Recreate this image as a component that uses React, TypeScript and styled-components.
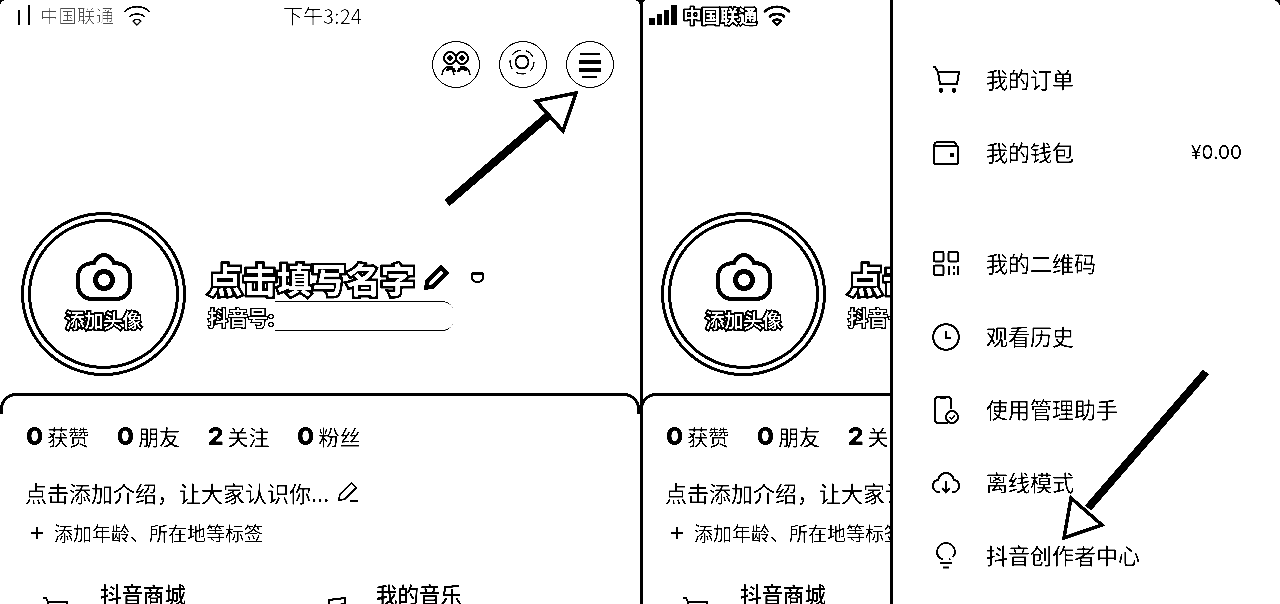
import { ReactNode } from "react";
import styled, { createGlobalStyle } from "styled-components";

const GlobalStyle = createGlobalStyle`
  html, body {
    margin: 0;
    padding: 0;
    background: #fff;
  }
  body {
    font-family: "Noto Sans CJK SC", "Liberation Sans", sans-serif;
    color: #000;
  }
`;

function SignalIcon({ faint }: { faint?: boolean }) {
  return (
    <svg width={faint ? 18 : 30} height="22" viewBox={faint ? "0 0 18 22" : "0 0 30 22"} fill="#000">
      {!faint && <rect x="1" y="14" width="6" height="7" rx="1" />}
      {!faint && <rect x="9" y="10" width="5" height="11" rx="1" />}
      <rect x={faint ? 4 : 16} y="6" width={faint ? 2 : 5} height="15" rx="1" />
      <rect x={faint ? 14 : 23} y="1" width={faint ? 2 : 6} height="20" rx="1" />
    </svg>
  );
}

function WifiIcon({ faint }: { faint?: boolean }) {
  return (
    <svg width="30" height="22" viewBox="0 0 30 22" fill="none" stroke="#000" strokeWidth={faint ? 1.4 : 2.6}>
      <path d="M2 8 C9 1 21 1 28 8" />
      <path d="M7 13 C11 9 19 9 23 13" />
      <path d="M11 17 L15 21 L19 17 C17 15 13 15 11 17 Z" fill={faint ? "none" : "#fff"} />
    </svg>
  );
}

function FriendsIcon() {
  return (
    <svg width="34" height="30" viewBox="0 0 34 30" fill="none" stroke="#000" strokeWidth="1.6">
      <circle cx="11" cy="8" r="6" strokeWidth="2" />
      <circle cx="23" cy="8" r="6" strokeWidth="2" />
      <circle cx="11" cy="8" r="2" fill="#000" />
      <circle cx="23" cy="8" r="2" fill="#000" />
      <path d="M3 25 C4 17 9 16 13 17 L15 25" />
      <path d="M8 21 C10 17 14 17 16 22" strokeWidth="3" />
      <path d="M19 22 C21 17 25 17 27 21" strokeWidth="3" />
      <path d="M21 17 C26 16 30 18 31 25" />
    </svg>
  );
}

function ScanIcon() {
  return (
    <svg width="32" height="32" viewBox="0 0 32 32" fill="none" stroke="#000">
      <circle cx="15" cy="13" r="6.5" strokeWidth="1.8" />
      <circle cx="15" cy="13" r="12" strokeWidth="1.2" strokeDasharray="10 5" />
    </svg>
  );
}

function MenuIcon() {
  return (
    <svg width="26" height="28" viewBox="0 0 26 28" stroke="#000">
      <path d="M3 3 H23" strokeWidth="1.4" />
      <path d="M2 11 H24" strokeWidth="4" />
      <path d="M2 19 H24" strokeWidth="4" />
      <path d="M5 26 H20" strokeWidth="1.4" />
    </svg>
  );
}

function CameraIcon() {
  return (
    <svg width="56" height="48" viewBox="0 0 56 48" fill="none" stroke="#000" strokeWidth="4">
      <path d="M18 10 C20 5 24 2 28 2 C32 2 36 5 38 10 C46 10 54 14 54 24 V32 C54 40 48 46 40 46 H16 C8 46 2 40 2 32 V24 C2 14 10 10 18 10 Z" />
      <circle cx="28" cy="27" r="8.5" strokeWidth="5" />
    </svg>
  );
}

function PencilIcon({ size, bold }: { size: number; bold?: boolean }) {
  return (
    <svg width={size} height={size} viewBox="0 0 24 24" fill="none" stroke="#000" strokeWidth={bold ? 4 : 1.8}>
      <path d="M3 21 L4 15 L16 3 L21 8 L9 20 Z" />
      {!bold && <path d="M15 22 H23" strokeWidth="2.4" />}
    </svg>
  );
}

function CartIcon() {
  return (
    <svg width="28" height="27" viewBox="0 0 28 27" fill="none" stroke="#000" strokeWidth="2">
      <path d="M1 1 H3 L6 6 H27 L25 18 H8 L6 6" />
      <circle cx="9" cy="24.5" r="1.4" fill="#000" />
      <circle cx="22" cy="24.5" r="1.4" fill="#000" />
    </svg>
  );
}

function WalletIcon() {
  return (
    <svg width="26" height="24" viewBox="0 0 26 24" fill="none" stroke="#000" strokeWidth="2">
      <path d="M1 6 C1 3 2 1 5 1 H20 C22 1 23 2 23 4" />
      <rect x="1" y="5" width="24" height="18" rx="2" />
      <circle cx="19" cy="14" r="1.2" fill="#000" />
    </svg>
  );
}

function QrIcon() {
  return (
    <svg width="26" height="25" viewBox="0 0 26 25" fill="none" stroke="#000" strokeWidth="2">
      <rect x="1" y="1" width="9.5" height="9.5" rx="1" />
      <rect x="15.5" y="1" width="9.5" height="9.5" rx="1" />
      <rect x="1" y="14.5" width="9.5" height="9.5" rx="1" />
      <path d="M16 15 V24 M21 15 V18 M21 21 V24 M25 15 V24" strokeWidth="2.4" />
    </svg>
  );
}

function ClockIcon() {
  return (
    <svg width="28" height="28" viewBox="0 0 28 28" fill="none" stroke="#000" strokeWidth="2">
      <circle cx="14" cy="14" r="12.8" />
      <path d="M14 8 V15 H19" strokeWidth="2.4" />
    </svg>
  );
}

function PhoneCheckIcon() {
  return (
    <svg width="25" height="28" viewBox="0 0 25 28" fill="none" stroke="#000" strokeWidth="2">
      <path d="M14 27 H4 C2 27 1 26 1 24 V4 C1 2 2 1 4 1 H14 C16 1 17 2 17 4 V13" />
      <path d="M6 1.5 H12" strokeWidth="3" />
      <circle cx="18" cy="21" r="6" />
      <path d="M15.5 21 L17.5 23 L21 19" strokeWidth="1.6" />
    </svg>
  );
}

function CloudIcon() {
  return (
    <svg width="28" height="22" viewBox="0 0 28 22" fill="none" stroke="#000" strokeWidth="2">
      <path d="M8 20 H7 C3.5 20 1 17.5 1 14 C1 11 3 8.5 6 8 C7 4 10 1 14 1 C18 1 21 4 22 8 C25 8.5 27 11 27 14 C27 17.5 24.5 20 21 20 H20" />
      <path d="M14 9 V20 M10 16 L14 20.5 L18 16" />
    </svg>
  );
}

function BulbIcon() {
  return (
    <svg width="20" height="27" viewBox="0 0 20 27" fill="none" stroke="#000" strokeWidth="2">
      <path d="M7 17.5 C3 16 1 13 1 10 C1 5 5 1 10 1 C15 1 19 5 19 10 C19 13 17 16 13 17.5" strokeDasharray="44 3" />
      <path d="M4 21 H16" />
      <path d="M7 25.5 H13" />
    </svg>
  );
}

function BagIcon() {
  return (
    <svg width="26" height="26" viewBox="0 0 26 26" fill="none" stroke="#000" strokeWidth="2">
      <path d="M1 1 H4 L6 5 H25 L23 16 H8 L6 5" />
    </svg>
  );
}

function MusicIcon() {
  return (
    <svg width="24" height="26" viewBox="0 0 24 26" fill="none" stroke="#000" strokeWidth="2">
      <path d="M4 20 V3 L20 1 V7 L4 9" />
    </svg>
  );
}

function ProfileView({ bright }: { bright?: boolean }) {
  return (
    <Profile $shifted={bright}>
      <StatusBar $bright={bright}>
        <SignalIcon faint={!bright} />
        <Carrier $bright={bright}>中国联通</Carrier>
        <WifiIcon faint={!bright} />
        {!bright && <Clock>下午3:24</Clock>}
      </StatusBar>

      <Actions>
        <RoundButton><FriendsIcon /></RoundButton>
        <RoundButton><ScanIcon /></RoundButton>
        <RoundButton><MenuIcon /></RoundButton>
      </Actions>

      <Identity>
        <AvatarRing>
          <AvatarInner>
            <CameraIcon />
            <AvatarLabel>添加头像</AvatarLabel>
          </AvatarInner>
        </AvatarRing>
        <NameBlock>
          <NameRow>
            <Name>点击填写名字</Name>
            <PencilIcon size={27} bold />
            <Caret />
          </NameRow>
          <AccountRow>
            <AccountLabel>抖音号:</AccountLabel>
            <Redacted />
          </AccountRow>
        </NameBlock>
      </Identity>

      <Card>
        <Stats>
          <Stat><StatValue>0</StatValue>获赞</Stat>
          <Stat><StatValue>0</StatValue>朋友</Stat>
          <Stat><StatValue>2</StatValue>关注</Stat>
          <Stat><StatValue>0</StatValue>粉丝</Stat>
        </Stats>
        <Intro>
          点击添加介绍，让大家认识你...
          <PencilIcon size={23} />
        </Intro>
        <Tags>
          <Plus>+</Plus>
          添加年龄、所在地等标签
        </Tags>
        <Shortcuts>
          <Shortcut>
            <ShortcutIcon $width={58}><BagIcon /></ShortcutIcon>
            抖音商城
          </Shortcut>
          <Shortcut>
            <ShortcutIcon $width={51}><MusicIcon /></ShortcutIcon>
            我的音乐
          </Shortcut>
        </Shortcuts>
      </Card>
    </Profile>
  );
}

function MenuRow({ icon, label, extra }: { icon: ReactNode; label: string; extra?: string }) {
  return (
    <Row>
      <RowIcon>{icon}</RowIcon>
      <RowLabel>{label}</RowLabel>
      {extra && <RowExtra>{extra}</RowExtra>}
    </Row>
  );
}

export default function App() {
  return (
    <Page>
      <GlobalStyle />
      <LeftPane>
        <ProfileView />
      </LeftPane>
      <RightPane>
        <Behind>
          <ProfileView bright />
        </Behind>
        <Drawer>
          <RowGroup>
            <MenuRow icon={<CartIcon />} label="我的订单" />
            <MenuRow icon={<WalletIcon />} label="我的钱包" extra="¥0.00" />
          </RowGroup>
          <RowGroup>
            <MenuRow icon={<QrIcon />} label="我的二维码" />
            <MenuRow icon={<ClockIcon />} label="观看历史" />
            <MenuRow icon={<PhoneCheckIcon />} label="使用管理助手" />
            <MenuRow icon={<CloudIcon />} label="离线模式" />
            <MenuRow icon={<BulbIcon />} label="抖音创作者中心" />
          </RowGroup>
        </Drawer>
      </RightPane>

      <Arrow $left={440} $top={85} width="145" height="125" viewBox="0 0 145 125">
        <path d="M7 118 L109 30" stroke="#000" strokeWidth="8" />
        <path d="M136 8 L96 16 L123 46 Z" fill="#fff" stroke="#000" strokeWidth="3.5" />
      </Arrow>
      <Arrow $left={1055} $top={365} width="160" height="180" viewBox="0 0 160 180">
        <path d="M151 7 L33 143" stroke="#000" strokeWidth="8" />
        <path d="M9 173 L16 133 L47 160 Z" fill="#fff" stroke="#000" strokeWidth="3.5" />
      </Arrow>
    </Page>
  );
}

const Page = styled.div`
  position: relative;
  display: flex;
  width: 1280px;
  height: 604px;
  overflow: hidden;
  background: #000;
  filter: grayscale(1) contrast(6);
`;

const LeftPane = styled.div`
  width: 640px;
  flex: none;
  overflow: hidden;
  background: #fff;
  border-top-left-radius: 6px;
  border-top-right-radius: 6px;
`;

const RightPane = styled.div`
  display: flex;
  flex: 1;
  min-width: 0;
  overflow: hidden;
  border-left: 3px solid #000;
`;

const Behind = styled.div`
  width: 247px;
  flex: none;
  overflow: hidden;
  background: #fff;
  border-top-left-radius: 4px;
`;

const Profile = styled.div<{ $shifted?: boolean }>`
  display: flex;
  flex-direction: column;
  width: 640px;
  height: 604px;
  margin-left: ${(props) => (props.$shifted ? "-3px" : "0")};
`;

const StatusBar = styled.div<{ $bright?: boolean }>`
  position: relative;
  display: flex;
  align-items: center;
  gap: ${(props) => (props.$bright ? "5px" : "8px")};
  height: 30px;
  padding-left: ${(props) => (props.$bright ? "8px" : "14px")};
  flex: none;
`;

const Carrier = styled.span<{ $bright?: boolean }>`
  font-size: 18.5px;
  font-weight: ${(props) => (props.$bright ? 700 : 400)};
  color: ${(props) => (props.$bright ? "#fff" : "#777")};
  -webkit-text-stroke: ${(props) => (props.$bright ? "3px #000" : "0")};
  paint-order: stroke fill;
  white-space: nowrap;
`;

const Clock = styled.span`
  position: absolute;
  left: 283px;
  top: 1px;
  font-size: 20px;
  color: #666;
  white-space: nowrap;
`;

const Actions = styled.div`
  display: flex;
  justify-content: flex-end;
  gap: 19px;
  margin-top: 11px;
  padding-right: 26px;
  flex: none;
`;

const RoundButton = styled.div`
  display: flex;
  align-items: center;
  justify-content: center;
  width: 48px;
  height: 47px;
  box-sizing: border-box;
  border: 1.5px solid #000;
  border-radius: 50%;
`;

const Identity = styled.div`
  display: flex;
  align-items: center;
  gap: 22px;
  height: 164px;
  margin-top: 124px;
  padding-left: 21px;
  flex: none;
`;

const AvatarRing = styled.div`
  box-sizing: border-box;
  width: 165px;
  height: 164px;
  padding: 4px;
  border: 3px solid #000;
  border-radius: 50%;
  flex: none;
`;

const AvatarInner = styled.div`
  display: flex;
  flex-direction: column;
  align-items: center;
  justify-content: center;
  gap: 6px;
  height: 100%;
  box-sizing: border-box;
  padding-bottom: 3px;
  border: 3px solid #000;
  border-radius: 50%;
`;

const AvatarLabel = styled.div`
  font-size: 19px;
  line-height: 26px;
  font-weight: 500;
  color: #fff;
  -webkit-text-stroke: 3.5px #000;
  paint-order: stroke fill;
`;

const NameBlock = styled.div`
  display: flex;
  flex-direction: column;
  gap: 3px;
  margin-top: -2px;
`;

const NameRow = styled.div`
  display: flex;
  align-items: center;
  gap: 8px;
`;

const Name = styled.div`
  font-size: 34.5px;
  line-height: 46px;
  font-weight: 700;
  color: #fff;
  -webkit-text-stroke: 5px #000;
  paint-order: stroke fill;
  white-space: nowrap;
`;

const Caret = styled.div`
  width: 9px;
  height: 6px;
  margin-left: 13px;
  border: 2px solid #000;
  border-top-width: 3px;
  border-radius: 2px 2px 50% 50%;
`;

const AccountRow = styled.div`
  display: flex;
  align-items: center;
`;

const AccountLabel = styled.span`
  font-size: 20px;
  line-height: 28px;
  font-weight: 500;
  color: #fff;
  -webkit-text-stroke: 2.5px #000;
  paint-order: stroke fill;
  white-space: nowrap;
`;

const Redacted = styled.span`
  width: 180px;
  height: 28px;
  margin-top: -4px;
  border-top: 1px solid #000;
  border-bottom: 1.5px solid #000;
  border-radius: 2px 12px 12px 2px;
  background: #fff;
`;

const Card = styled.div`
  position: relative;
  flex: 1;
  min-height: 0;
  margin-top: 17px;
  padding: 27.5px 0 0 26px;
  overflow: hidden;

  &::before {
    content: "";
    position: absolute;
    top: 0;
    left: 0;
    right: 0;
    height: 18px;
    border: 3px solid #000;
    border-top-width: 3.5px;
    border-bottom: none;
    border-radius: 16px 16px 0 0;
  }
`;

const Stats = styled.div`
  display: flex;
  gap: 27.5px;
  height: 30px;
  align-items: center;
`;

const Stat = styled.div`
  display: flex;
  align-items: center;
  gap: 4px;
  font-size: 21px;
  line-height: 30px;
  white-space: nowrap;
`;

const StatValue = styled.span`
  font-family: "Inter", "Liberation Sans", sans-serif;
  font-size: 25px;
  font-weight: 800;
`;

const Intro = styled.div`
  display: flex;
  align-items: center;
  gap: 7px;
  margin-top: 26px;
  margin-left: -1px;
  font-size: 22px;
  line-height: 30px;
  white-space: nowrap;
`;

const Tags = styled.div`
  display: flex;
  align-items: center;
  margin-top: 13px;
  padding-left: 4px;
  font-size: 19px;
  line-height: 26px;
  white-space: nowrap;
`;

const Plus = styled.span`
  width: 24px;
  font-family: "Liberation Sans", sans-serif;
  font-size: 24px;
  line-height: 26px;
`;

const Shortcuts = styled.div`
  display: grid;
  grid-template-columns: 283px 283px;
  margin-top: 33px;
  padding-left: 16px;
`;

const Shortcut = styled.div`
  display: flex;
  align-items: flex-start;
  font-size: 21.5px;
  line-height: 30px;
  font-weight: 500;
  white-space: nowrap;
`;

const ShortcutIcon = styled.div<{ $width: number }>`
  width: ${(props) => props.$width}px;
  height: 26px;
  margin-top: 18px;
  flex: none;
`;

const Drawer = styled.div`
  display: flex;
  flex-direction: column;
  gap: 38px;
  flex: 1;
  min-width: 0;
  box-sizing: border-box;
  padding: 43px 38px 0 39px;
  border-left: 3px solid #000;
  border-top-right-radius: 8px;
  background: #fff;
`;

const RowGroup = styled.div`
  display: flex;
  flex-direction: column;
`;

const Row = styled.div`
  display: flex;
  align-items: center;
  height: 73px;
`;

const RowIcon = styled.div`
  display: flex;
  align-items: center;
  justify-content: center;
  width: 28px;
  margin-right: 26px;
  flex: none;
`;

const RowLabel = styled.div`
  flex: 1;
  padding-bottom: 4px;
  font-size: 22px;
  white-space: nowrap;
`;

const RowExtra = styled.div`
  font-family: "Inter", "Liberation Sans", sans-serif;
  font-size: 19px;
`;

const Arrow = styled.svg<{ $left: number; $top: number }>`
  position: absolute;
  left: ${(props) => props.$left}px;
  top: ${(props) => props.$top}px;
  pointer-events: none;
`;
